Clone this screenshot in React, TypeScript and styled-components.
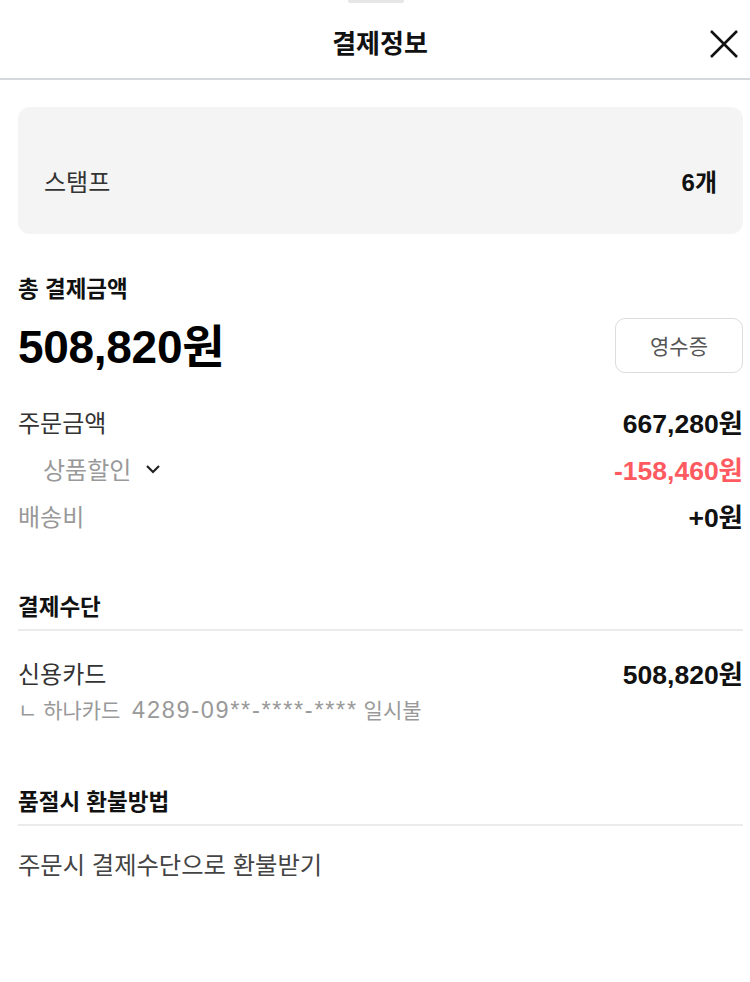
import React from "react";
import styled, { createGlobalStyle } from "styled-components";

const Global = createGlobalStyle`
  html, body { margin: 0; padding: 0; background: #fff; }
  body { font-family: "Liberation Sans", "Noto Sans CJK KR", sans-serif; color: #222; }
  * { box-sizing: border-box; }
`;

const Page = styled.div`
  width: 750px;
  min-height: 982px;
  background: #fff;
  position: relative;
`;

const Handle = styled.div`
  position: absolute;
  top: 0;
  left: 348px;
  width: 56px;
  height: 3px;
  background: #e6e6e6;
  border-radius: 0 0 2px 2px;
`;

const Header = styled.header`
  height: 80px;
  padding: 10px 0 0 10px;
  display: flex;
  align-items: center;
  justify-content: center;
  position: relative;
  border-bottom: 2px solid #d5d8dc;
`;

const Title = styled.h1`
  margin: 0;
  font-size: 26px;
  line-height: 32px;
  font-weight: 700;
  color: #111;
`;

const Close = styled.button`
  position: absolute;
  right: 8px;
  top: 26px;
  width: 36px;
  height: 36px;
  border: 0;
  background: none;
  padding: 0;
  display: flex;
  align-items: center;
  justify-content: center;
`;

const Body = styled.main`
  padding: 27px 7px 0 18px;
  display: flex;
  flex-direction: column;
`;

const StampCard = styled.div`
  background: #f4f4f4;
  border-radius: 12px;
  height: 127px;
  padding: 61px 26px 0 26px;
  display: flex;
  justify-content: space-between;
  align-items: flex-start;
  font-size: 24px;
  line-height: 30px;
`;

const StampLabel = styled.span`
  color: #333;
`;

const StampValue = styled.span`
  font-weight: 700;
  color: #111;
`;

const SectionTitle = styled.div`
  font-size: 22.5px;
  font-weight: 700;
  color: #111;
  line-height: 28px;
`;

const TotalBlock = styled.section`
  margin-top: 42px;
  display: flex;
  flex-direction: column;
`;

const TotalRow = styled.div`
  display: flex;
  justify-content: space-between;
  align-items: center;
  height: 56px;
  margin-top: 13px;
`;

const TotalAmount = styled.div`
  font-size: 46px;
  font-weight: 700;
  color: #000;
  line-height: 56px;
  padding-top: 3px;
  letter-spacing: -0.3px;
`;

const ReceiptButton = styled.button`
  width: 128px;
  height: 55px;
  border: 1.5px solid #dcdcdc;
  border-radius: 10px;
  background: #fff;
  font-family: inherit;
  font-size: 21px;
  color: #555;
`;

const Rows = styled.div`
  display: flex;
  flex-direction: column;
  margin-top: 25px;
`;

const Row = styled.div<{ $indent?: boolean }>`
  display: flex;
  justify-content: space-between;
  align-items: center;
  height: 47px;
  padding-left: ${(p) => (p.$indent ? "25px" : "0")};
`;

const Label = styled.span<{ $muted?: boolean }>`
  font-size: 24px;
  color: ${(p) => (p.$muted ? "#999" : "#333")};
  display: flex;
  align-items: center;
  gap: 14px;
`;

const Value = styled.span<{ $red?: boolean }>`
  font-size: 26.5px;
  font-weight: 700;
  color: ${(p) => (p.$red ? "#ff5a5f" : "#111")};
`;

const Section = styled.section<{ $top: number }>`
  margin-top: ${(p) => p.$top}px;
  display: flex;
  flex-direction: column;
`;

const Divider = styled.div`
  height: 2px;
  background: #ebebeb;
  margin-top: 7px;
`;

const MethodRow = styled.div`
  display: flex;
  justify-content: space-between;
  align-items: center;
  margin-top: 25px;
  height: 32px;
`;

const Sub = styled.div`
  font-size: 21px;
  color: #999;
  margin-top: 8px;
  line-height: 28px;
  white-space: pre;
`;

const CardNo = styled.span`
  font-size: 23.5px;
  letter-spacing: 1.7px;
`;

const Refund = styled.div`
  font-size: 24.3px;
  color: #444;
  margin-top: 24px;
  line-height: 32px;
`;

export default function App() {
  return (
    <Page>
      <Global />
      <Handle />
      <Header>
        <Title>결제정보</Title>
        <Close aria-label="close">
          <svg width="30" height="30" viewBox="0 0 30 30">
            <path d="M2 2 L28 28 M28 2 L2 28" stroke="#111" strokeWidth="2.6" fill="none" />
          </svg>
        </Close>
      </Header>
      <Body>
        <StampCard>
          <StampLabel>스탬프</StampLabel>
          <StampValue>6개</StampValue>
        </StampCard>

        <TotalBlock>
          <SectionTitle>총 결제금액</SectionTitle>
          <TotalRow>
            <TotalAmount>508,820원</TotalAmount>
            <ReceiptButton>영수증</ReceiptButton>
          </TotalRow>
        </TotalBlock>

        <Rows>
          <Row>
            <Label>주문금액</Label>
            <Value>667,280원</Value>
          </Row>
          <Row $indent>
            <Label $muted>
              상품할인
              <svg width="16" height="10" viewBox="0 0 16 10">
                <path d="M2 2 L8 8 L14 2" stroke="#222" strokeWidth="2.2" fill="none" />
              </svg>
            </Label>
            <Value $red>-158,460원</Value>
          </Row>
          <Row>
            <Label $muted>배송비</Label>
            <Value>+0원</Value>
          </Row>
        </Rows>

        <Section $top={55}>
          <SectionTitle>결제수단</SectionTitle>
          <Divider />
          <MethodRow>
            <Label>신용카드</Label>
            <Value>508,820원</Value>
          </MethodRow>
          <Sub>
            {"ㄴ 하나카드  "}
            <CardNo>4289-09**-****-****</CardNo>
            {" 일시불"}
          </Sub>
        </Section>

        <Section $top={64}>
          <SectionTitle>품절시 환불방법</SectionTitle>
          <Divider />
          <Refund>주문시 결제수단으로 환불받기</Refund>
        </Section>
      </Body>
    </Page>
  );
}
